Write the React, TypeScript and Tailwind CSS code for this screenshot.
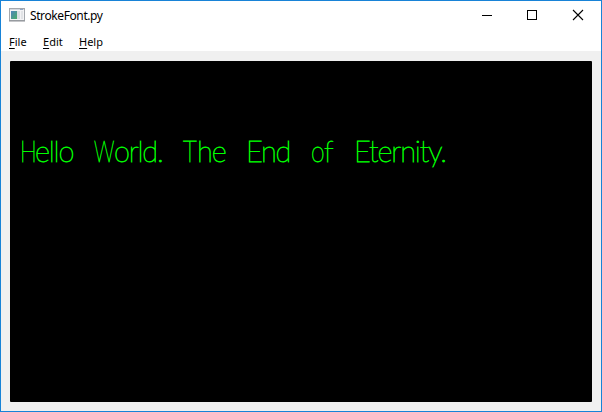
const words = [
  { cap: 'H', rest: 'ello', box: 'w-[74px]', capStyle: 'w-[15px] scale-x-[0.77]', tracking: 'tracking-[-1.2px]' },
  { cap: 'W', rest: 'orld.', box: 'w-[89px]', capStyle: 'w-[20px] scale-x-[0.7]', tracking: 'tracking-[-1.2px]' },
  { cap: 'T', rest: 'he', box: 'w-[63px]', capStyle: 'w-[14px] scale-x-[0.83]', tracking: 'tracking-[-1px]' },
  { cap: 'E', rest: 'nd', box: 'w-[65px]', capStyle: 'w-[15px]', tracking: 'tracking-[-1.2px]' },
  { cap: 'o', rest: 'f', box: 'w-[43px]', capStyle: 'w-[13px] scale-x-[0.85]', tracking: 'tracking-[0px]' },
  { cap: 'E', rest: 'ternity.', box: 'w-[100px]', capStyle: 'w-[15px]', tracking: 'tracking-[-1.1px]' },
];

function AppIcon() {
  return (
    <svg width="16" height="14" viewBox="0 0 16 14">
      <defs>
        <linearGradient id="pane" x1="0" y1="0" x2="1" y2="1">
          <stop offset="0" stopColor="#4f83bd" />
          <stop offset="1" stopColor="#48ad68" />
        </linearGradient>
      </defs>
      <rect x="0.5" y="0.5" width="15" height="12" fill="#f3f3f5" stroke="#a4a8ad" />
      <path d="M1 1.5H15" stroke="#d5d9df" />
      <path d="M11 1.5h3" stroke="#8fa6c4" />
      <rect x="2" y="3" width="6" height="8" fill="url(#pane)" />
      <rect x="8" y="3" width="3" height="8" fill="#d8dde2" />
      <rect x="12" y="3" width="2" height="8" fill="#e1e3e6" />
      <path d="M0 13H16" stroke="#8b8e93" />
    </svg>
  );
}

export default function App() {
  return (
    <div className="flex h-[412px] w-[602px] flex-col overflow-hidden border border-[#1883d7] bg-[#f0f0f0] font-['Noto_Sans','Open_Sans',sans-serif] text-black">
      <header className="flex h-[30px] shrink-0 items-start bg-white">
        <div className="mt-[7px] ml-2">
          <AppIcon />
        </div>
        <h1 className="mt-[7px] ml-[5px] grow text-[12px] leading-4 tracking-[-0.4px]">StrokeFont.py</h1>
        <svg width="138" height="29" viewBox="0 0 138 29" fill="none" stroke="#000" shapeRendering="crispEdges">
          <path d="M19 14.5h10" />
          <rect x="64.5" y="9.5" width="9" height="9" />
          <path d="M110 9l10 10M120 9l-10 10" shapeRendering="auto" strokeWidth="1.1" />
        </svg>
      </header>
      <nav className="flex h-5 shrink-0 bg-white pl-2 text-[11px] leading-[22px]">
        <span className="w-[34px]"><u className="underline-offset-2">F</u>ile</span>
        <span className="w-9"><u className="underline-offset-2">E</u>dit</span>
        <span><u className="underline-offset-2">H</u>elp</span>
      </nav>
      <main className="mx-[9px] mt-[10px] mb-[9px] grow rounded-[1px] bg-black pt-[72px] pl-[10px]">
        <p className="flex font-['Lato',sans-serif] text-[29px] leading-9 font-thin whitespace-nowrap text-[#00ff00] [-webkit-text-stroke:0.8px_#00ff00]">
          {words.map((w) => (
            <span key={w.cap + w.rest} className={`${w.box} ${w.tracking} flex shrink-0`}>
              <span className={`${w.capStyle} shrink-0 origin-left`}>{w.cap}</span>
              <span>{w.rest}</span>
            </span>
          ))}
        </p>
      </main>
    </div>
  );
}
